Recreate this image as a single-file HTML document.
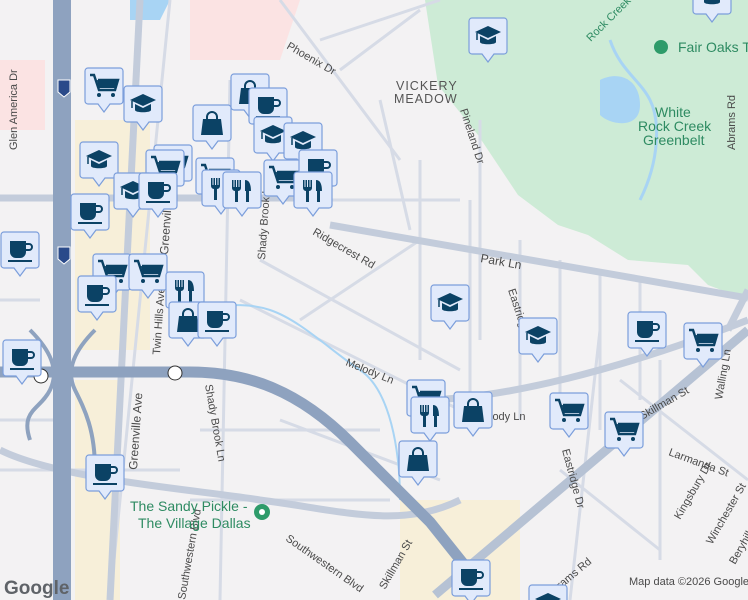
<!DOCTYPE html>
<html><head><meta charset="utf-8"><style>
html,body{margin:0;padding:0;width:748px;height:600px;overflow:hidden;background:#f3f2f3;font-family:"Liberation Sans",sans-serif}
svg{display:block}
</style></head><body>
<svg width="748" height="600" viewBox="0 0 748 600" xmlns="http://www.w3.org/2000/svg">
<defs>
<g id="m">
<path d="M3 0h32a3 3 0 0 1 3 3v30a3 3 0 0 1-3 3h-10l-6 8-6-8h-10a3 3 0 0 1-3-3v-30a3 3 0 0 1 3-3z" fill="#e1eafb" stroke="#7b9edb" stroke-width="1.2"/>
</g>
<g id="cup"><use href="#m"/><path d="M9 9h16v11a6 6 0 0 1-6 6h-4a6 6 0 0 1-6-6z M25 11h3a4 4 0 0 1 0 8h-3v-2h3a2 2 0 0 0 0-4h-3z M7 28h24v2h-24z" fill="#0b4265"/></g>
<g id="cart"><use href="#m"/><path d="M5 7h4l5 15h16l3-10h-20" fill="none" stroke="#0b4265" stroke-width="2.4"/><path d="M12 12h20l-2 8h-16z" fill="#0b4265"/><circle cx="14" cy="27" r="2" fill="#0b4265"/><circle cx="28" cy="27" r="2" fill="#0b4265"/></g>
<g id="grad"><use href="#m"/><path d="M6 14l13-6 13 6-13 6z M11 18v6c0 3 16 3 16 0v-6l-8 4z" fill="#0b4265"/><path d="M8 15v7" stroke="#0b4265" stroke-width="1.5"/></g>
<g id="fork"><use href="#m"/><path d="M9 8v8a3 3 0 0 0 3 3v11h3v-11a3 3 0 0 0 3-3v-8h-1.5v7h-1v-7h-1.5v7h-1v-7h-1.5v7h-1v-7z M22 8c5 0 6 6 6 11h-2v11h-3v-11h-1z" fill="#0b4265"/></g>
<g id="bag"><use href="#m"/><path d="M10 14h18l2 16h-22z" fill="#0b4265"/><path d="M14 15v-3a5 5 0 0 1 10 0v3" fill="none" stroke="#0b4265" stroke-width="2"/></g>
</defs>
<!-- park -->
<path d="M425 0h323v300l-40-15-20-20-60-5-40-25-30-10-40-30-40-60-40-50z" fill="#cdebd6"/>
<path d="M600 80c20-10 40 0 40 25s-30 20-40 10z" fill="#a8d4f4"/>
<path d="M130 0h40l-10 20h-30z" fill="#a8d4f4"/>
<path d="M190 0h110l-20 60h-90z" fill="#fbe3e3"/>
<path d="M0 60h45v70h-45z" fill="#fbe3e3"/>
<!-- commercial yellowish -->
<path d="M75 120h75v230h-75z" fill="#f7efd9"/>
<path d="M75 380h45v220h-45z" fill="#f7efd9"/>
<path d="M400 500h120v100h-120z" fill="#f7efd9"/>
<!-- minor streets grid -->
<g stroke="#d6dbe6" stroke-width="3" fill="none">
<path d="M280 0l120 160 M320 40l120 -40 M340 70l80 -60 M300 200h160 M260 260l200 110 M240 300l220 110 M380 100l30 130 M420 160v200 M470 200v200 M520 240v180 M560 260v160 M600 270v160 M640 280v120 M300 320l120 -80 M280 420l160 60 M200 430h180 M190 500h200 M620 380l128 100 M660 360v200 M560 470l100 80 M0 300h40 M0 420h60 M0 470h180"/>
<path d="M170 0l-60 600 M230 80l-10 520 M480 120v220 M600 330l-30 270"/>
</g>
<!-- water streams -->
<path d="M180 300c40 10 60 0 90 10s60 40 90 60 40 80 40 130" stroke="#a8d4f4" stroke-width="2" fill="none"/>
<path d="M610 40c10 30 30 40 40 60s10 60 -10 100" stroke="#a8d4f4" stroke-width="3" fill="none"/>
<!-- secondary roads -->
<g stroke="#c3ccdb" stroke-width="7" fill="none">
<path d="M330 225L748 298"/>
<path d="M0 198h330"/>
<path d="M140 0l-30 600"/>
<path d="M748 290l-20 40"/>
<path d="M420 400c80 0 200 -30 328 -80"/>
<path d="M0 450c60 30 200 40 260 50 80 10 140 30 200 0"/>
</g>
<!-- highways -->
<g stroke="#8ea2bf" fill="none">
<path d="M62 0v600" stroke-width="18"/>
<path d="M0 372h190c60 0 110 20 160 70l80 80 40 50" stroke-width="11"/>
<path d="M435 595L748 330" stroke="#b6c2d4" stroke-width="9"/>
<path d="M30 330c20 20 30 40 20 60-10 20-30 20-20 50" stroke-width="4"/>
<path d="M95 330c-20 20-30 40-20 60 10 20 20 40 20 80" stroke-width="4"/>
</g>
<!-- labels -->
<g font-family="Liberation Sans,sans-serif" font-size="11" fill="#4a4a4a">
<text x="396" y="90" font-size="12.5" letter-spacing="1" fill="#555">VICKERY</text>
<text x="394" y="103" font-size="12.5" letter-spacing="1" fill="#555">MEADOW</text>
<text x="480" y="262" font-size="12" transform="rotate(10 480 262)">Park Ln</text>
<text x="345" y="365" transform="rotate(22 345 365)">Melody Ln</text>
<text x="490" y="420">lody Ln</text>
<text x="312" y="234" transform="rotate(30 312 234)">Ridgecrest Rd</text>
<text x="286" y="48" transform="rotate(30 286 48)">Phoenix Dr</text>
<text x="642" y="420" transform="rotate(-30 642 420)">Skillman St</text>
<text x="385" y="590" transform="rotate(-60 385 590)">Skillman St</text>
<text x="550" y="598" transform="rotate(-40 550 598)">Abrams Rd</text>
<text x="735" y="150" transform="rotate(-90 735 150)">Abrams Rd</text>
<text x="508" y="290" transform="rotate(72 508 290)">Eastridge Dr</text>
<text x="562" y="450" transform="rotate(75 562 450)">Eastridge Dr</text>
<text x="460" y="110" transform="rotate(72 460 110)">Pineland Dr</text>
<text x="668" y="455" transform="rotate(20 668 455)">Larmanda St</text>
<text x="680" y="520" transform="rotate(-60 680 520)">Kingsbury Dr</text>
<text x="712" y="545" transform="rotate(-60 712 545)">Winchester St</text>
<text x="735" y="565" transform="rotate(-60 735 565)">Beryhill St</text>
<text x="722" y="400" transform="rotate(-80 722 400)">Walling Ln</text>
<text x="17" y="150" transform="rotate(-90 17 150)">Glen America Dr</text>
<text x="137" y="470" transform="rotate(-86 137 470)" font-size="12">Greenville Ave</text>
<text x="168" y="255" transform="rotate(-86 168 255)" font-size="12">Greenville Ave</text>
<text x="205" y="385" transform="rotate(80 205 385)">Shady Brook Ln</text>
<text x="265" y="260" transform="rotate(-86 265 260)">Shady Brook Ln</text>
<text x="160" y="355" transform="rotate(-86 160 355)">Twin Hills Ave</text>
<text x="285" y="540" transform="rotate(35 285 540)">Southwestern Blvd</text>
<text x="185" y="600" transform="rotate(-80 185 600)">Southwestern Blvd</text>
<text x="629" y="585">Map data ©2026 Google</text>
</g>
<g font-family="Liberation Sans,sans-serif" font-size="14" fill="#2e8b62">
<text x="678" y="52">Fair Oaks T</text>
<text x="655" y="117" text-anchor="start">White</text>
<text x="638" y="131">Rock Creek</text>
<text x="643" y="145">Greenbelt</text>
<text x="130" y="511">The Sandy Pickle -</text>
<text x="138" y="528">The Village Dallas</text>
<text x="585" y="32" transform="rotate(-45 600 30)" font-size="11">Rock Creek</text>
</g>
<circle cx="661" cy="47" r="7" fill="#2e9b6a"/><circle cx="262" cy="512" r="8" fill="#2e9b6a"/><circle cx="262" cy="512" r="3" fill="#fff"/>
<circle cx="41" cy="376" r="7" fill="#fff" stroke="#333"/><circle cx="175" cy="373" r="7" fill="#fff" stroke="#333"/>
<path d="M58 80h12v12l-6 5-6-5z" fill="#2a4a8a" stroke="#fff"/><path d="M58 247h12v12l-6 5-6-5z" fill="#2a4a8a" stroke="#fff"/>
<text x="4" y="594" font-family="Liberation Sans,sans-serif" font-size="19" font-weight="bold" fill="#5f6368">Google</text>
<!-- markers -->
<use href="#grad" x="469" y="18"/>
<use href="#grad" x="693" y="-22"/>
<use href="#cart" x="85" y="68"/>
<use href="#grad" x="124" y="86"/>
<use href="#bag" x="231" y="74"/>
<use href="#cup" x="249" y="88"/>
<use href="#bag" x="193" y="105"/>
<use href="#grad" x="254" y="117"/>
<use href="#grad" x="284" y="123"/>
<use href="#grad" x="80" y="142"/>
<use href="#cart" x="154" y="145"/>
<use href="#cart" x="146" y="150"/>
<use href="#grad" x="114" y="173"/>
<use href="#cup" x="139" y="173"/>
<use href="#cart" x="196" y="158"/>
<use href="#fork" x="202" y="170"/>
<use href="#fork" x="223" y="172"/>
<use href="#cart" x="264" y="160"/>
<use href="#cup" x="299" y="150"/>
<use href="#fork" x="294" y="172"/>
<use href="#cup" x="71" y="194"/>
<use href="#cup" x="1" y="232"/>
<use href="#cart" x="93" y="254"/>
<use href="#cart" x="129" y="254"/>
<use href="#cup" x="78" y="276"/>
<use href="#fork" x="166" y="272"/>
<use href="#bag" x="169" y="302"/>
<use href="#cup" x="198" y="302"/>
<use href="#cup" x="3" y="340"/>
<use href="#grad" x="431" y="285"/>
<use href="#grad" x="519" y="318"/>
<use href="#cup" x="628" y="312"/>
<use href="#cart" x="684" y="323"/>
<use href="#cart" x="407" y="380"/>
<use href="#fork" x="411" y="397"/>
<use href="#bag" x="454" y="392"/>
<use href="#cart" x="550" y="393"/>
<use href="#cart" x="605" y="412"/>
<use href="#bag" x="399" y="441"/>
<use href="#cup" x="86" y="455"/>
<use href="#cup" x="452" y="560"/>
<use href="#grad" x="529" y="585"/>
</svg>
</body></html>
